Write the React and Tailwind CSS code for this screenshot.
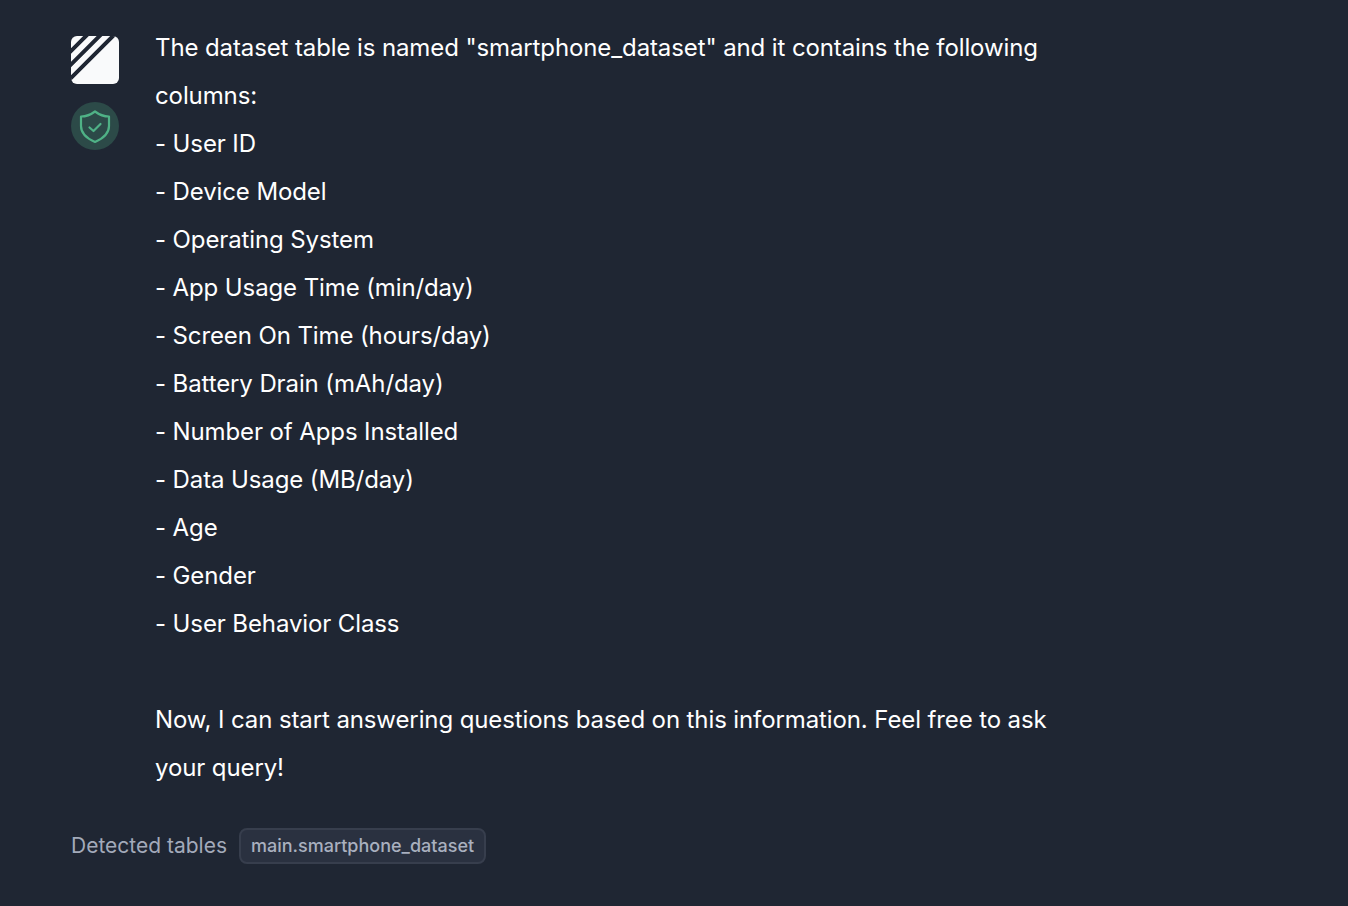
const lines = [
  '- User ID',
  '- Device Model',
  '- Operating System',
  '- App Usage Time (min/day)',
  '- Screen On Time (hours/day)',
  '- Battery Drain (mAh/day)',
  '- Number of Apps Installed',
  '- Data Usage (MB/day)',
  '- Age',
  '- Gender',
  '- User Behavior Class',
];

const Logo = () => (
  <svg width="48" height="48" viewBox="0 0 48 48" className="rounded-md">
    <rect width="48" height="48" fill="#f9fafb" />
    <path d="M-2 17 L17 -2 M-2 30.5 L30.5 -2 M-2 44 L44 -2" stroke="#1f2633" strokeWidth="4" fill="none" />
  </svg>
);

const Shield = () => (
  <svg width="48" height="48" viewBox="0 0 48 48" fill="none" stroke="#4fb286" strokeWidth="2.2" strokeLinejoin="round" strokeLinecap="round">
    <path d="M24 9.5 C28 12.5 33 14.5 38 14.5 V24 C38 32 31 37 24 40 C17 37 10 32 10 24 V14.5 C15 14.5 20 12.5 24 9.5 Z" />
    <path d="M18.5 25.5 L22.5 29 L29.5 22" />
  </svg>
);

export default function App() {
  return (
    <div className="min-h-[906px] bg-[#1f2633] pl-[71px] pt-6 font-['Inter',sans-serif] antialiased">
      <div className="flex gap-9">
        <div className="flex flex-col gap-[18px] pt-3">
          <Logo />
          <div className="h-12 w-12 rounded-full bg-[#2c4a48]">
            <Shield />
          </div>
        </div>
        <div className="w-[900px] text-[24px] leading-[48px] tracking-[-0.11px] text-white">
          <p>The dataset table is named "smartphone_dataset" and it contains the following columns:</p>
          {lines.map((line) => (
            <p key={line}>{line}</p>
          ))}
          <p className="mt-12">Now, I can start answering questions based on this information. Feel free to ask your query!</p>
        </div>
      </div>
      <div className="mt-[36px] flex items-center gap-3">
        <span className="text-[21px] text-[#a3aaba]">Detected tables</span>
        <span className="rounded-lg border-2 border-[#373e4d] bg-[#2a3140] px-[10px] py-[5px] text-lg font-medium leading-[22px] text-[#a9b0bf]">
          main.smartphone_dataset
        </span>
      </div>
    </div>
  );
}
